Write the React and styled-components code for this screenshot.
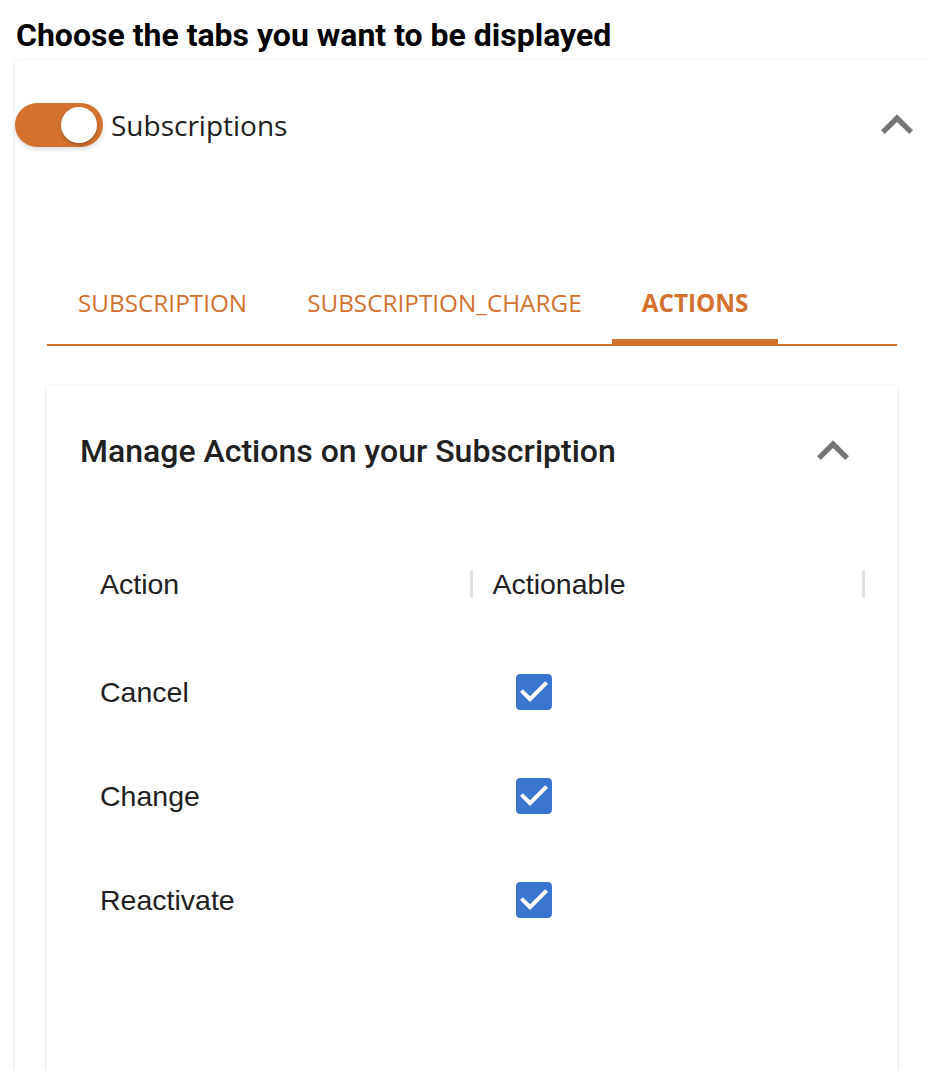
import React from 'react';
import styled, { createGlobalStyle } from 'styled-components';

const ORANGE = '#d3722f';

const GlobalStyle = createGlobalStyle`
  html, body {
    margin: 0;
    padding: 0;
    background: #fff;
    overflow-x: hidden;
  }
  body {
    font-family: Roboto, "Liberation Sans", sans-serif;
    color: #212121;
  }
`;

const Page = styled.div`
  padding-top: 11px;
`;

const PageTitle = styled.h2`
  margin: 0 0 0 16px;
  font-family: Roboto, sans-serif;
  font-weight: 700;
  font-size: 32px;
  line-height: 49px;
  color: #000;
`;

const OuterCard = styled.section`
  width: 914px;
  margin-left: 15px;
  background: #fff;
  box-shadow: 0 1px 4px rgba(0, 0, 0, 0.12);
  border-radius: 4px;
  padding-top: 43px;
`;

const HeaderRow = styled.div`
  display: flex;
  align-items: center;
  height: 44px;
`;

const ToggleTrack = styled.div`
  width: 88px;
  height: 44px;
  box-sizing: border-box;
  padding: 0 6px;
  border-radius: 22px;
  background: ${ORANGE};
  display: flex;
  align-items: center;
  justify-content: ${p => (p.on ? 'flex-end' : 'flex-start')};
  box-shadow: 0 3px 4px rgba(0, 0, 0, 0.12);
`;

const Knob = styled.div`
  width: 36px;
  height: 36px;
  border-radius: 50%;
  background: #fff;
  box-shadow: 0 2px 3px rgba(0, 0, 0, 0.25);
`;

const ToggleLabel = styled.span`
  margin-left: 8px;
  font-family: "Open Sans", sans-serif;
  font-size: 28px;
  color: #212121;
  flex: 1;
`;

const Chevron = ({ color = '#757575' }) => (
  <svg width="64" height="64" viewBox="0 0 24 24" style={{ display: 'block' }}>
    <path fill={color} d="M12 8l-6 6 1.41 1.41L12 10.83l4.59 4.58L18 14z" />
  </svg>
);

const TabsArea = styled.div`
  padding: 0 32px;
  margin-top: 119px;
`;

const TabBar = styled.div`
  display: flex;
  border-bottom: 2px solid ${ORANGE};
`;

const Tab = styled.div`
  position: relative;
  height: 76px;
  box-sizing: border-box;
  padding: 0 30px 4px ${p => (p.first ? 31 : 30)}px;
  margin-bottom: 2px;
  display: flex;
  align-items: center;
  font-family: "Open Sans", sans-serif;
  font-size: 24.3px;
  font-weight: ${p => (p.active ? 700 : 400)};
  color: ${ORANGE};
  text-transform: uppercase;
  white-space: nowrap;
`;

const Indicator = styled.span`
  position: absolute;
  left: 0;
  right: 0;
  bottom: -4px;
  height: 7px;
  background: ${ORANGE};
`;

const InnerCard = styled.div`
  margin-top: 40px;
  background: #fff;
  box-shadow: 0 1px 5px rgba(0, 0, 0, 0.14);
  padding: 0 32px 140px 33px;
`;

const InnerHeader = styled.div`
  display: flex;
  align-items: center;
  justify-content: space-between;
  height: 130px;
`;

const InnerTitle = styled.h3`
  margin: 0;
  font-family: Roboto, sans-serif;
  font-weight: 500;
  font-size: 32px;
  color: #212121;
`;

const Grid = styled.div`
  margin-top: 40px;
  font-family: "Liberation Sans", Arial, sans-serif;
  font-size: 28.5px;
  color: #212121;
`;

const GridHeader = styled.div`
  display: flex;
  align-items: center;
  height: 56px;
  margin-bottom: 28px;
`;

const HeadCell = styled.div`
  width: ${p => p.w}px;
  box-sizing: border-box;
  padding-left: 20px;
`;

const Separator = styled.div`
  width: 3px;
  height: 28px;
  background: #e0e0e0;
`;

const Row = styled.div`
  display: flex;
  align-items: center;
  height: 104px;
`;

const Cell = styled.div`
  width: ${p => p.w}px;
  box-sizing: border-box;
  padding-left: ${p => p.pad}px;
  display: flex;
  align-items: center;
`;

const CheckBox = () => (
  <svg width="48" height="48" viewBox="0 0 24 24" style={{ display: 'block' }}>
    <path
      fill="#3a76d0"
      d="M19 3H5c-1.11 0-2 .9-2 2v14c0 1.1.89 2 2 2h14c1.11 0 2-.9 2-2V5c0-1.1-.89-2-2-2zm-9 14l-5-5 1.41-1.41L10 14.17l7.59-7.59L19 8l-9 9z"
    />
  </svg>
);

const tabs = ['Subscription', 'Subscription_charge', 'Actions'];
const actions = ['Cancel', 'Change', 'Reactivate'];

export default function App() {
  return (
    <Page>
      <GlobalStyle />
      <PageTitle>Choose the tabs you want to be displayed</PageTitle>
      <OuterCard>
        <HeaderRow>
          <ToggleTrack on>
            <Knob />
          </ToggleTrack>
          <ToggleLabel>Subscriptions</ToggleLabel>
          <Chevron />
        </HeaderRow>
        <TabsArea>
          <TabBar>
            {tabs.map((t, i) => (
              <Tab key={t} first={i === 0} active={i === 2}>
                {t}
                {i === 2 && <Indicator />}
              </Tab>
            ))}
          </TabBar>
          <InnerCard>
            <InnerHeader>
              <InnerTitle>Manage Actions on your Subscription</InnerTitle>
              <Chevron />
            </InnerHeader>
            <Grid>
              <GridHeader>
                <HeadCell w={390}>Action</HeadCell>
                <Separator />
                <HeadCell w={390}>Actionable</HeadCell>
                <Separator />
              </GridHeader>
              {actions.map(a => (
                <Row key={a}>
                  <Cell w={393} pad={20}>{a}</Cell>
                  <Cell w={390} pad={37}>
                    <CheckBox />
                  </Cell>
                </Row>
              ))}
            </Grid>
          </InnerCard>
        </TabsArea>
      </OuterCard>
    </Page>
  );
}
